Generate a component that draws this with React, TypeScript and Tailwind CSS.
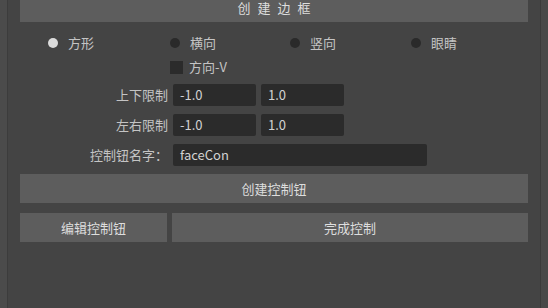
import React from "react";

const font = { fontFamily: '"Noto Sans CJK SC", "Noto Sans", sans-serif' };

function Radio({ label, checked }: { label: string; checked?: boolean }) {
  return (
    <div className="flex items-center gap-[10px]">
      <span
        className={`w-[10px] h-[10px] rounded-full ${checked ? "bg-[#dcdcdc]" : "bg-[#2a2a2a]"}`}
      />
      <span className="text-[13px] text-[#c4c4c4]">{label}</span>
    </div>
  );
}

function Field({ value, w }: { value: string; w: string }) {
  return (
    <div className={`${w} h-[22px] bg-[#2b2b2b] rounded-[2px] flex items-center px-[7px] text-[13px] text-[#d2d2d2]`}>
      {value}
    </div>
  );
}

function Row({ label, children }: { label: string; children: React.ReactNode }) {
  return (
    <div className="flex items-center h-[22px]">
      <div className="w-[148px] text-right text-[13px] text-[#c4c4c4]">{label}</div>
      <div className="flex gap-[5px] ml-[5px]">{children}</div>
    </div>
  );
}

export default function App() {
  return (
    <div className="w-[548px] h-[308px] flex bg-[#444444] overflow-hidden" style={font}>
      {/* left edge */}
      <div className="w-[8px] h-full bg-[#4b4b4b] border-r border-[#3c3c3c]" />

      <div className="flex-1 flex flex-col pl-[12px] pr-[12px]">
        <div className="h-[22px] bg-[#5d5d5d] flex items-center justify-center pb-[6px] pl-[7px] text-[13px] leading-[14px] tracking-[7px] text-[#dedede]">
          创建边框
        </div>

        <div className="grid grid-cols-[122px_120px_121px_100px] pl-[28px] mt-[11px] h-[14px] items-center">
          <Radio label="方形" checked />
          <Radio label="横向" />
          <Radio label="竖向" />
          <Radio label="眼睛" />
        </div>

        <div className="flex items-center gap-[6px] pl-[150px] mt-[13px] h-[14px]">
          <span className="w-[13px] h-[13px] bg-[#2b2b2b]" />
          <span className="text-[13px] text-[#c4c4c4]">方向-V</span>
        </div>

        <div className="flex flex-col gap-[8px] mt-[10px]">
          <Row label="上下限制">
            <Field value="-1.0" w="w-[83px]" />
            <Field value="1.0" w="w-[83px]" />
          </Row>
          <Row label="左右限制">
            <Field value="-1.0" w="w-[83px]" />
            <Field value="1.0" w="w-[83px]" />
          </Row>
          <Row label="控制钮名字：">
            <Field value="faceCon" w="w-[254px]" />
          </Row>
        </div>

        <button className="mt-[8px] h-[29px] bg-[#5d5d5d] text-[13px] text-[#dedede]">
          创建控制钮
        </button>

        <div className="flex gap-[5px] mt-[10px]">
          <button className="w-[147px] h-[29px] bg-[#5d5d5d] text-[13px] text-[#dedede]">
            编辑控制钮
          </button>
          <button className="flex-1 h-[29px] bg-[#5d5d5d] text-[13px] text-[#dedede]">
            完成控制
          </button>
        </div>
      </div>

      {/* right edge */}
      <div className="w-[8px] h-full bg-[#484848] border-l border-[#3a3a3a]" />
    </div>
  );
}
